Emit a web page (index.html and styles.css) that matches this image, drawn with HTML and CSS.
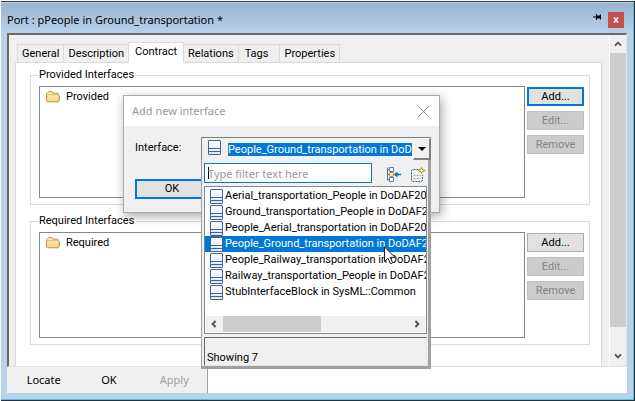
FILE: index.html
```html
<!DOCTYPE html>
<html lang="en">
<head>
<meta charset="utf-8">
<title>Port : pPeople in Ground_transportation *</title>
<link rel="stylesheet" href="styles.css">
</head>
<body>
<svg class="defs" aria-hidden="true">
  <defs>
    <linearGradient id="paper" x1="0" y1="0" x2="0" y2="1">
      <stop offset="0" stop-color="#fff"/><stop offset="1" stop-color="#dde5f2"/>
    </linearGradient>
    <linearGradient id="gold" x1="0" y1="0" x2="0" y2="1">
      <stop offset="0" stop-color="#fff4cf"/><stop offset="1" stop-color="#fbd27a"/>
    </linearGradient>
    <symbol id="block" viewBox="0 0 13 15">
      <rect x=".5" y=".5" width="12" height="14" rx=".5" fill="url(#paper)" stroke="#3f6299"/>
      <path d="M1 8.500h11M1 11.500h11" stroke="#3f6299"/>
    </symbol>
    <symbol id="folder" viewBox="0 0 14 12">
      <path d="M.6 10V2.600L1.800 1.400l1-.8h3l1 1.600h4.800l.8.8v1l.9.4v5l-1 1.400H1.600z" fill="url(#gold)" stroke="#c18a3a"/>
      <path d="M1.500 3.600h10.400" stroke="#e6bd74"/>
    </symbol>
    <symbol id="chev" viewBox="0 0 8 6">
      <path d="M1 4.600l3-3 3 3" fill="none" stroke="#555" stroke-width="2"/>
    </symbol>
  </defs>
</svg>
<div class="window">
  <header class="titlebar">
    <h1>Port : pPeople in Ground_transportation *</h1>
    <button class="pin" aria-label="Pin"><svg width="9" height="6" viewBox="0 0 9 6"><path d="M0 3h3M3.500 0v6M7.500.5v5" stroke="#000"/><path d="M3 1.500h5v3H3z" fill="#000"/></svg></button>
    <button class="close" aria-label="Close"><svg width="6" height="6" viewBox="0 0 6 6"><path d="M1 .5l4 5M5 .5l-4 5" stroke="#fff" stroke-width="1.500"/></svg></button>
  </header>
  <main class="frame">
    <div class="content">
      <nav class="tabs" role="tablist">
        <button class="tab" role="tab">General</button>
        <button class="tab" role="tab">Description</button>
        <button class="tab active" role="tab" aria-selected="true">Contract</button>
        <button class="tab" role="tab">Relations</button>
        <button class="tab short" role="tab">Tags</button>
        <button class="tab" role="tab">Properties</button>
      </nav>
      <section class="panel">
        <fieldset class="group">
          <legend>Provided Interfaces</legend>
          <div class="list"><div class="node"><svg width="14" height="12"><use href="#folder"/></svg>Provided</div></div>
          <div class="actions">
            <button class="btn focus">Add...</button>
            <button class="btn" disabled>Edit...</button>
            <button class="btn" disabled>Remove</button>
          </div>
        </fieldset>
        <fieldset class="group second">
          <legend>Required Interfaces</legend>
          <div class="list"><div class="node"><svg width="14" height="12"><use href="#folder"/></svg>Required</div></div>
          <div class="actions">
            <button class="btn">Add...</button>
            <button class="btn" disabled>Edit...</button>
            <button class="btn" disabled>Remove</button>
          </div>
        </fieldset>
      </section>
    </div>
    <div class="vscroll">
      <svg width="8" height="6"><use href="#chev"/></svg>
      <div class="vthumb"></div>
      <svg class="down" width="8" height="6"><use href="#chev"/></svg>
    </div>
  </main>
  <footer class="footer">
    <div class="toolbar">
      <button>Locate</button>
      <button>OK</button>
      <button disabled>Apply</button>
    </div>
  </footer>
</div>

<div class="dialog" role="dialog" aria-labelledby="dlg-title">
  <div class="dlg-head">
    <h2 id="dlg-title">Add new interface</h2>
    <button aria-label="Close dialog"><svg width="11" height="11" viewBox="0 0 11 11"><path d="M.5.5l10 10M10.500.5l-10 10" stroke="#888"/></svg></button>
  </div>
  <div class="dlg-body">
    <label for="iface">Interface:</label>
    <button class="ok">OK</button>
  </div>
  <div class="picker">
    <div class="combo">
      <svg width="13" height="15"><use href="#block"/></svg>
      <select id="iface"><option>People_Ground_transportation in DoDAF2</option></select>
      <button class="arrow" aria-label="Open list"><svg width="8" height="4" viewBox="0 0 8 4"><path d="M0 0h8L4 4z"/></svg></button>
    </div>
    <div class="drop">
      <div class="filter">
        <input type="text" placeholder="Type filter text here" aria-label="Filter">
        <svg width="15" height="15" viewBox="0 0 15 15">
          <path d="M1.500.5v13M1.500 2.500h3M1.500 7.500h3M1.500 12.500h3" fill="none" stroke="#5573b5"/>
          <path d="M3.500.5h4v4h-4zM3.500 10.500h4v4h-4z" fill="#fff" stroke="#5573b5"/>
          <rect x="3.500" y="5.500" width="4" height="4" rx="1" fill="#ffe98a" stroke="#a58a1c"/>
          <path d="M9 7.500h6" stroke="#1261a8" stroke-width="1.500"/><path d="M8 7.500L11.500 4.500v6z" fill="#1261a8"/>
        </svg>
        <svg width="15" height="15" viewBox="0 0 15 15">
          <path d="M7.500 2.500H2q-1.500 0-1.500 1.500v9q0 1.500 1.500 1.500h8q1.500 0 1.500-1.500V8" fill="none" stroke="#2c5a94" stroke-dasharray="2 1"/>
          <path d="M2.500 8.500h7M2.500 11.500h7" stroke="#8dbd9c" stroke-dasharray="2 1"/>
          <path d="M10.500.5l1 2 2.500 1-2.500 1-1 2-1-2-2.500-1 2.500-1z" fill="#fff3b0" stroke="#a58a1c"/>
        </svg>
      </div>
      <div class="results">
        <ul role="listbox">
          <li role="option"><svg width="13" height="15"><use href="#block"/></svg><span>Aerial_transportation_People in DoDAF20_</span></li>
          <li role="option"><svg width="13" height="15"><use href="#block"/></svg><span>Ground_transportation_People in DoDAF2</span></li>
          <li role="option"><svg width="13" height="15"><use href="#block"/></svg><span>People_Aerial_transportation in DoDAF20_</span></li>
          <li role="option" class="selected" aria-selected="true"><svg width="13" height="15"><use href="#block"/></svg><span>People_Ground_transportation in DoDAF2</span></li>
          <li role="option"><svg width="13" height="15"><use href="#block"/></svg><span>People_Railway_transportation in DoDAF2</span></li>
          <li role="option"><svg width="13" height="15"><use href="#block"/></svg><span>Railway_transportation_People in DoDAF2</span></li>
          <li role="option"><svg width="13" height="15"><use href="#block"/></svg><span>StubInterfaceBlock in SysML::Common</span></li>
        </ul>
        <div class="hscroll">
          <svg class="left" width="8" height="6"><use href="#chev"/></svg>
          <div class="hthumb"></div>
          <svg class="right" width="8" height="6"><use href="#chev"/></svg>
        </div>
      </div>
      <div class="status">Showing 7</div>
    </div>
  </div>
  <svg class="cursor" width="13" height="19" viewBox="0 0 13 19"><path d="M.5.8v14.700l3.500-3.300 2.500 5.600 2.200-1-2.400-5.400h4.800z" fill="#fff" stroke="#222"/></svg>
</div>
</body>
</html>
```
FILE: styles.css
```css
* { box-sizing: border-box; }

body {
  margin: 0;
  font: 11px/16px Roboto, "Liberation Sans", Arial, sans-serif;
  color: #000;
  background: #fff;
}

button, input, select { font: inherit; color: inherit; margin: 0; padding: 0; border: 0; background: none; border-radius: 0; }
svg { display: block; flex: none; }
.defs { position: absolute; width: 0; height: 0; }

.window {
  display: flex;
  flex-direction: column;
  height: 100vh;
  border-top: 1px solid #fff;
  border-left: 1px solid #fff;
  background: #b9d1ea;
  box-shadow: inset 0 1px #333a40, inset -1px -1px #2b3036, inset -2px -2px #4fc4e4;
  padding: 1px 8px 8px 6px;
}

.titlebar {
  display: flex;
  align-items: center;
  height: 30px;
  margin: 1px -6px 0 -6px;
  padding: 4px 9px 0 6px;
  background: linear-gradient(#99b4d1, #b9d1ea);
}
.titlebar h1 { flex: 1; margin: 0; font: 11px/16px "Noto Sans", sans-serif; }
.pin { margin: -7px 6px 0 0; }
.close { display: grid; place-items: center; width: 16px; height: 16px; background: #c75050; }

.frame {
  flex: 1;
  min-height: 0;
  display: flex;
  border: 2px solid #696969;
  border-color: #696969 #e3e3e3 #e3e3e3 #696969;
  border-width: 2px 1px 1px 2px;
  background: #f0f0f0;
}
.content { flex: 1; overflow: hidden; padding: 6px 7px 0 6px; display: flex; flex-direction: column; }

.tabs { display: flex; align-items: flex-end; height: 21px; padding-left: 2px; }
.tab { height: 18px; padding: 0 4px; border: 1px solid #d9d9d9; border-bottom: 0; background: #f0f0f0; margin-right: -1px; }
.tab.active { height: 21px; margin-bottom: -1px; padding: 0 6px 3px; background: #fff; position: relative; }
.tab.short { padding: 0 11px 0 6px; }

.panel { flex: 1; border: 1px solid #d9d9d9; border-bottom: 0; background: #fff; padding: 4px 11px 0 14px; }

.group { display: flex; gap: 2px; margin: 0; border: 1px solid #dcdcdc; padding: 3px 5px 6px 8px; min-width: 0; }
.group legend { padding: 0 2px 0 0; line-height: 16px; }
.group.second { margin-top: 8px; }
.list { flex: 1; height: 112px; border: 1px solid #828790; background: #fff; padding: 2px 6px; }
.second .list { height: 106px; }
.node { display: flex; align-items: center; gap: 6px; }
.actions { width: 57px; display: flex; flex-direction: column; gap: 5px; padding-top: 1px; }
.btn { height: 19px; border: 1px solid #adadad; background: #e1e1e1; line-height: 16px; }
.btn.focus { border: 2px solid #0078d7; }
.btn:disabled { border-color: #bfbfbf; background: #ccc; color: #838383; }

.vscroll { width: 17px; display: flex; flex-direction: column; align-items: center; border-left: 1px solid #fff; padding: 6px 0 7px; }
.vthumb { width: 100%; flex: 1; margin: 6px 0 26px; background: #cdcdcd; }
.down { transform: rotate(180deg); }

.footer { background: #fff; }
.toolbar { display: flex; width: 201px; height: 26px; border-right: 1px solid #a0a0a0; background: #f0f0f0; padding: 0 0 0 4px; font: 11px/16px "Noto Sans", sans-serif; }
.toolbar button { flex: 1; }
.toolbar button:disabled { color: #a0a0a0; }

.dialog {
  position: absolute;
  left: 123px;
  top: 95px;
  width: 317px;
  border: 1px solid #aaa;
  background: #f0f0f0;
  box-shadow: 2px 3px 10px rgba(0, 0, 0, .35);
}
.dlg-head { display: flex; align-items: center; height: 30px; padding: 0 10px 0 8px; background: #fff; }
.dlg-head h2 { flex: 1; margin: 0; font: 11px/16px "Noto Sans", sans-serif; color: #999; }
.dlg-body { display: flex; flex-direction: column; align-items: flex-start; gap: 23px; height: 86px; padding: 14px 11px; }
.ok { width: 74px; height: 21px; border: 2px solid #0078d7; background: #e1e1e1; }

.picker { position: absolute; left: 77px; top: 41px; width: 230px; }
.combo { display: flex; align-items: center; height: 23px; padding-left: 6px; border: 1px solid #808080; border-bottom: 0; border-right: 0; background: #f0f0f0; }
.combo > svg { margin-bottom: 3px; }
.combo select { flex: 1; min-width: 0; appearance: none; margin: 0 1px 0 7px; height: 13px; line-height: 13px; background: #0078d7; color: #fff; overflow: hidden; text-overflow: clip; }
.arrow { display: grid; place-items: center; width: 18px; height: 22px; border: 1px solid #fff; border-right: 2px solid #808080; border-bottom: 2px solid #808080; background: #f0f0f0; }
.drop { border: 1px solid #a0a0a0; border-right: 3px solid #a0a0a0; border-bottom: 3px solid #a0a0a0; border-top: 0; background: #f0f0f0; padding: 3px 1px 0 2px; }
.filter { display: flex; align-items: center; gap: 10px; }
.filter input { width: 168px; height: 20px; margin-right: 4px; border: 1px solid #0078d7; background: linear-gradient(#000, #000) 3px 50% / 1px 12px no-repeat #fff; padding: 0 3px; font: 11px/16px "Noto Sans", sans-serif; }
.filter input::placeholder { color: #999; opacity: 1; }
.filter svg { margin-top: 3px; }
.results { margin-top: 3px; border: 1px solid #828790; background: #fff; padding: 1px 0; }
.results ul { list-style: none; margin: 0; padding: 0; height: 128px; }
.results li { display: flex; align-items: center; gap: 2px; height: 16px; padding-left: 5px; overflow: hidden; white-space: nowrap; }
.results li.selected { background: #0078d7; color: #fff; }
.hscroll { display: flex; align-items: center; height: 16px; margin: 0 1px; padding: 0 4px; background: #f0f0f0; }
.hthumb { width: 98px; height: 16px; margin: 0 auto 0 5px; background: #cdcdcd; }
.left { transform: rotate(-90deg); }
.right { transform: rotate(90deg); }
.status { margin-top: 3px; height: 29px; padding: 12px 2px 0; border: 1px solid #e3e3e3; border-top-color: #696969; border-left-color: #696969; }

.cursor { position: absolute; left: 260px; top: 150px; }
```
